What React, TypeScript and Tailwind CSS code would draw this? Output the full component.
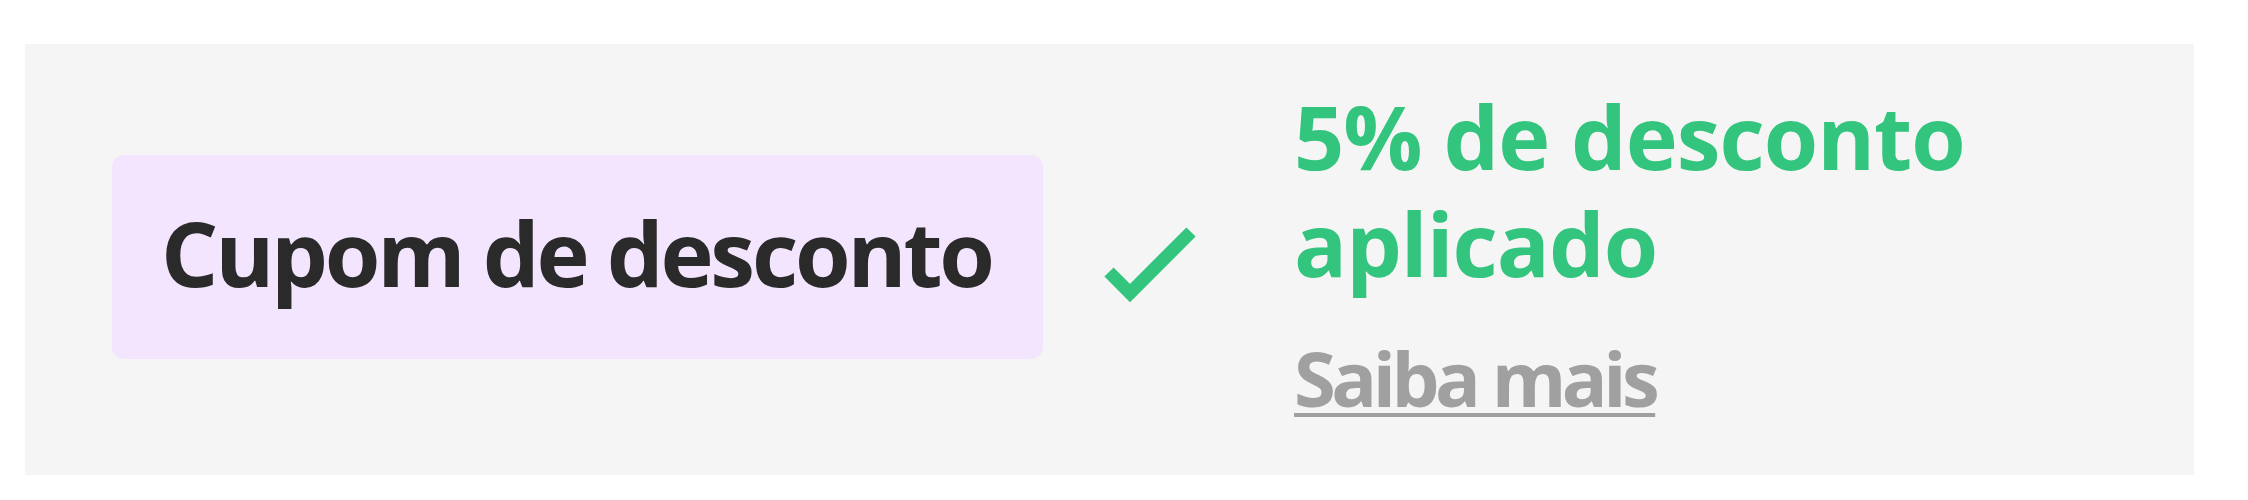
import React from "react";

export default function App() {
  return (
    <div className="w-full h-[500px] bg-white pt-[44px] pl-[25px] font-['Open_Sans',sans-serif]">
      <div className="w-[2169px] h-[431px] bg-[#f5f5f5] flex items-center pl-[87px]">
        {/* coupon label */}
        <div className="w-[931px] h-[204px] mb-[5px] pb-[10px] rounded-[12px] bg-[#f3e5fd] flex items-center pl-[49px]">
          <span className="text-[90px] leading-none font-bold tracking-[-3.2px] text-[#2a2a2a] whitespace-nowrap">
            Cupom de desconto
          </span>
        </div>

        {/* check */}
        <svg
          width="100"
          height="90"
          viewBox="0 0 100 90"
          className="ml-[57px] mt-[11px] shrink-0"
        >
          <path
            d="M9 52 L30 73 L91 12"
            fill="none"
            stroke="#33c47d"
            strokeWidth="13"
            strokeLinejoin="miter"
          />
        </svg>

        {/* result */}
        <div className="ml-[94px] mb-[14px] flex flex-col">
          <p className="text-[88px] leading-[107px] font-bold tracking-[-1px] text-[#33c47d]">
            5% de desconto
            <br />
            aplicado
          </p>
          <a
            href="#"
            className="mt-[36px] text-[76px] leading-[90px] font-bold tracking-[-4.5px] text-[#a0a0a0] underline decoration-[4px] underline-offset-[6px] w-fit"
          >
            Saiba mais
          </a>
        </div>
      </div>
    </div>
  );
}
